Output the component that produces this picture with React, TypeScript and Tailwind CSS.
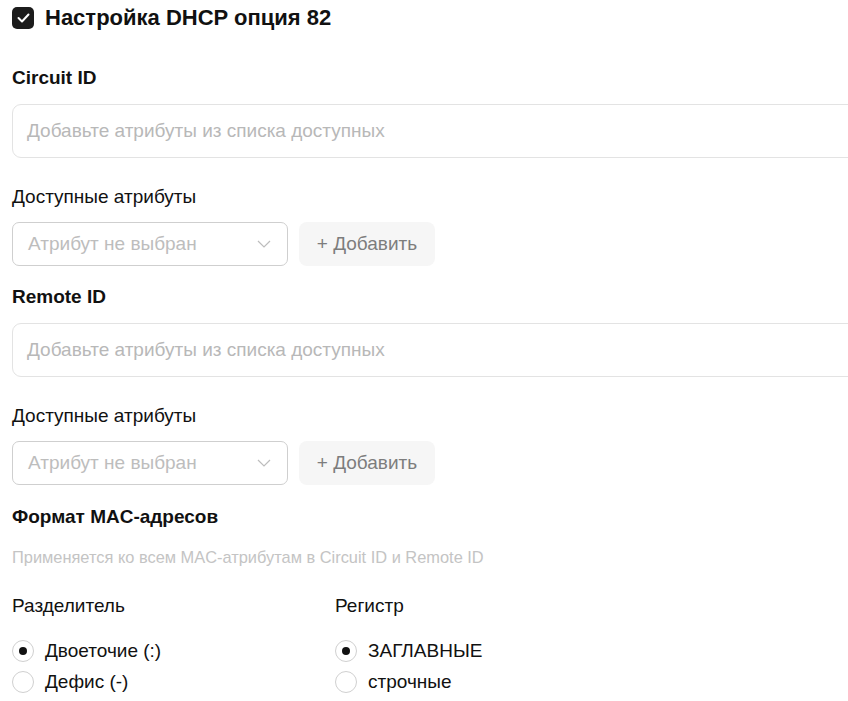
const attrBlock = (label: string) => (
    <>
        <h3 className="mt-[19px] text-[19px] leading-6 font-bold text-[#111]">{label}</h3>
        <div className="mt-[14px] h-[54px] w-[880px] rounded-[9px] border border-[#e3e3e3] px-[14px] flex items-center text-[19px] text-[#b8b8b8]">
            Добавьте атрибуты из списка доступных
        </div>
        <p className="mt-[27px] text-[19px] leading-6 text-[#111]">Доступные атрибуты</p>
        <div className="mt-[13px] flex gap-[11px]">
            <div className="h-[44px] w-[276px] rounded-[7px] border border-[#cfcfcf] pl-[15px] pr-[16px] flex items-center justify-between text-[19px] text-[#bdbdbd]">
                <span>Атрибут не выбран</span>
                <svg width="14" height="8" viewBox="0 0 14 8" fill="none">
                    <path d="M1 1l6 6 6-6" stroke="#bdbdbd" strokeWidth="1.2" />
                </svg>
            </div>
            <button className="h-[44px] w-[136px] rounded-[8px] bg-[#f6f6f6] text-[19px] text-[#7d7d7d] flex items-center justify-center">
                + Добавить
            </button>
        </div>
    </>
);

const Radio = ({ label, checked }: { label: string; checked?: boolean }) => (
    <label className="flex items-center gap-[11px] h-6 text-[19px] text-[#111]">
        <span className="w-[22px] h-[22px] rounded-full border border-[#d0d0d0] flex items-center justify-center">
            {checked && <span className="w-[8px] h-[8px] rounded-full bg-[#111]" />}
        </span>
        {label}
    </label>
);

export default function App() {
    return (
        <div className="w-full min-h-[701px] overflow-hidden bg-white font-['Liberation_Sans',Arial,sans-serif]">
            <div className="px-3 pt-[7px] flex flex-col items-start">
                {/* Header */}
                <div className="flex items-center gap-[11px]">
                    <span className="w-[22px] h-[22px] rounded-[5px] bg-[#1c1c1c] flex items-center justify-center">
                        <svg width="13" height="10" viewBox="0 0 13 10" fill="none">
                            <path d="M1.5 5l3.5 3.5L11.5 1.5" stroke="white" strokeWidth="2" strokeLinecap="round" strokeLinejoin="round" />
                        </svg>
                    </span>
                    <h2 className="text-[22px] leading-[22px] font-bold text-[#111]">Настройка DHCP опция 82</h2>
                </div>

                <div className="mt-[18px]" />
                {attrBlock("Circuit ID")}
                {attrBlock("Remote ID")}

                {/* MAC format */}
                <h3 className="mt-[20px] text-[19px] leading-6 font-bold text-[#111]">Формат MAC-адресов</h3>
                <p className="mt-[18px] text-[16.4px] leading-5 text-[#c4c4c4]">
                    Применяется ко всем MAC-атрибутам в Circuit ID и Remote ID
                </p>

                <div className="mt-[27px] flex">
                    <div className="w-[323px] flex flex-col">
                        <p className="text-[19px] leading-6 text-[#111]">Разделитель</p>
                        <div className="mt-[21px] flex flex-col gap-[7px]">
                            <Radio label="Двоеточие (:)" checked />
                            <Radio label="Дефис (-)" />
                        </div>
                    </div>
                    <div className="flex flex-col">
                        <p className="text-[19px] leading-6 text-[#111]">Регистр</p>
                        <div className="mt-[21px] flex flex-col gap-[7px]">
                            <Radio label="ЗАГЛАВНЫЕ" checked />
                            <Radio label="строчные" />
                        </div>
                    </div>
                </div>
            </div>
        </div>
    );
}
